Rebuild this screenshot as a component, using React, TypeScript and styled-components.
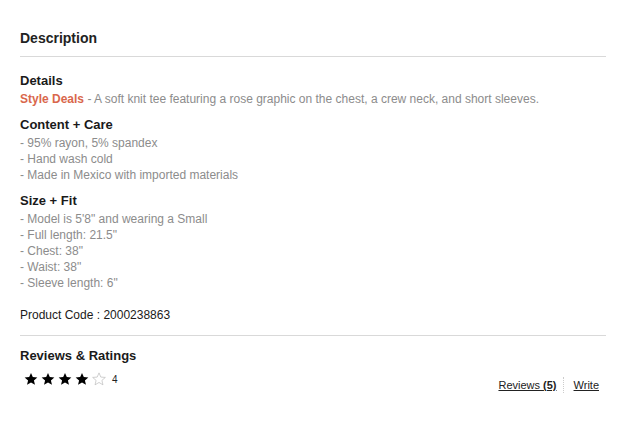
import React from "react";
import styled, { createGlobalStyle } from "styled-components";

const Global = createGlobalStyle`
  html, body { margin: 0; padding: 0; background: #fff; }
  body { font-family: "Liberation Sans", Arial, Helvetica, sans-serif; }
`;

const Page = styled.div`
  width: 586px;
  padding: 28px 23px 20px 20px;
`;

const Title = styled.h2`
  margin: 0;
  font-size: 14px;
  line-height: 20px;
  font-weight: bold;
  color: #222;
`;

const Divider = styled.hr<{ $top: number; $bottom: number }>`
  border: 0;
  height: 1px;
  background: #d9d9d9;
  margin: ${(p) => p.$top}px 0 ${(p) => p.$bottom}px;
`;

const Section = styled.section`
  margin-bottom: 8px;
`;

const SectionTitle = styled.h3`
  margin: 0;
  font-size: 13px;
  line-height: 20px;
  font-weight: bold;
  color: #1a1a1a;
`;

const Body = styled.div`
  font-size: 12px;
  line-height: 16px;
  color: #8c8c8c;
`;

const Brand = styled.span`
  color: #d9674c;
  font-weight: bold;
`;

const Code = styled.div`
  margin-top: 16px;
  font-size: 12px;
  line-height: 16px;
  color: #1a1a1a;
`;

const RatingRow = styled.div`
  display: flex;
  justify-content: space-between;
  align-items: flex-start;
`;

const Stars = styled.div`
  display: flex;
  align-items: center;
  padding: 6px 0 0 4px;
  gap: 3px;
`;

const Count = styled.span`
  font-size: 10px;
  color: #222;
  margin-left: 3px;
  line-height: 12px;
  padding-top: 2px;
`;

const Links = styled.div`
  display: flex;
  align-items: center;
  padding-top: 11px;
  margin-right: 7px;
`;

const Link = styled.a`
  font-size: 11px;
  line-height: 16px;
  color: #222;
  text-decoration: underline;
`;

const Sep = styled.span`
  width: 0;
  height: 16px;
  border-left: 1px dotted #ccc;
  margin: 0 10px 0 6px;
`;

const Star = ({ filled }: { filled: boolean }) => (
  <svg width="14" height="14" viewBox="0 0 24 24">
    <path
      d="M12 1.5l3.1 7.2 7.8.6-5.9 5.1 1.8 7.6L12 17.9 5.2 22l1.8-7.6L1.1 9.3l7.8-.6z"
      fill={filled ? "#000" : "#fff"}
      stroke={filled ? "#000" : "#bbb"}
      strokeWidth={filled ? 0 : 1.2}
    />
  </svg>
);

const contentCare = ["95% rayon, 5% spandex", "Hand wash cold", "Made in Mexico with imported materials"];
const sizeFit = [
  "Model is 5'8\" and wearing a Small",
  "Full length: 21.5\"",
  "Chest: 38\"",
  "Waist: 38\"",
  "Sleeve length: 6\"",
];

export default function App() {
  return (
    <Page>
      <Global />
      <Title>Description</Title>
      <Divider $top={8} $bottom={14} />
      <Section>
        <SectionTitle>Details</SectionTitle>
        <Body>
          <Brand>Style Deals</Brand> - A soft knit tee featuring a rose graphic on the chest, a crew neck, and short sleeves.
        </Body>
      </Section>
      <Section>
        <SectionTitle>Content + Care</SectionTitle>
        <Body>
          {contentCare.map((t) => (
            <div key={t}>- {t}</div>
          ))}
        </Body>
      </Section>
      <Section>
        <SectionTitle>Size + Fit</SectionTitle>
        <Body>
          {sizeFit.map((t) => (
            <div key={t}>- {t}</div>
          ))}
        </Body>
      </Section>
      <Code>Product Code : 2000238863</Code>
      <Divider $top={12} $bottom={10} />
      <SectionTitle>Reviews &amp; Ratings</SectionTitle>
      <RatingRow>
        <Stars>
          {[1, 2, 3, 4, 5].map((i) => (
            <Star key={i} filled={i <= 4} />
          ))}
          <Count>4</Count>
        </Stars>
        <Links>
          <Link href="#">Reviews <b>(5)</b></Link>
          <Sep />
          <Link href="#">Write</Link>
        </Links>
      </RatingRow>
    </Page>
  );
}
